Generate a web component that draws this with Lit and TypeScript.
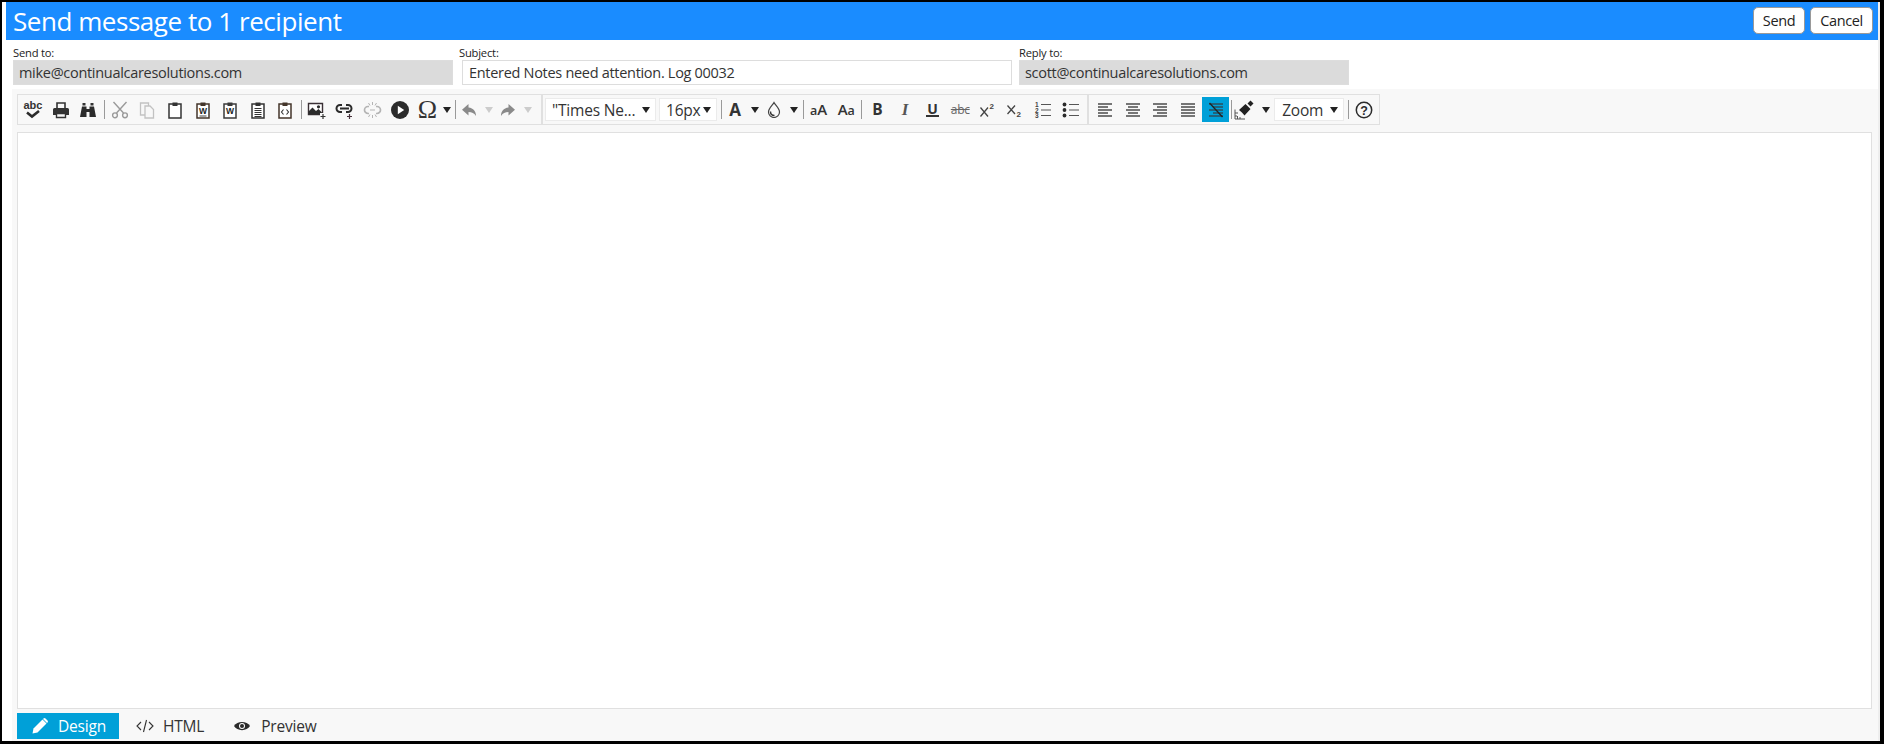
import { LitElement, html, css, svg } from "lit";
import { customElement } from "lit/decorators.js";

const ic = (body: unknown, w = 18, h = 18) =>
  html`<svg class="i" width=${w} height=${h} viewBox="0 0 ${w} ${h}">${body}</svg>`;

const clip = (inner: unknown, c = "#333") => svg`
  <path d="M3 3h12v14H3z" fill="#fff" stroke=${c} stroke-width="1.5"/>
  <path d="M6.5 1.5h5V5h-5z" fill=${c}/>${inner}`;

const wText = (y: number) => svg`<text x="9" y=${y} text-anchor="middle" font-family="Liberation Sans" font-weight="700" font-size="8.5" fill="#222">W</text>`;

const icons: Record<string, unknown> = {
  spell: html`<span class="spell"><span>abc</span><svg width="14" height="9" viewBox="0 0 14 9"><path d="M1 2.5l5 4 7-5.5" fill="none" stroke="#2b2b2b" stroke-width="2.6"/></svg></span>`,
  print: ic(svg`
    <path d="M5 8V2h8v6" fill="none" stroke="#333" stroke-width="1.6"/>
    <path d="M1 8.5q0-1.5 1.5-1.5h13q1.500 0 1.500 1.500V14h-3v-2H4v2H1z" fill="#333"/>
    <path d="M4.500 12.500h9v4h-9z" fill="none" stroke="#333" stroke-width="1.4"/>`),
  find: ic(svg`
    <path d="M3.5 2h3v2.500h-3zM11.500 2h3v2.500h-3z" fill="#333"/>
    <path d="M3 5.500h4.500V8h3V5.500H15l2 10.500h-6.500v-5h-3v5H1z" fill="#2b2b2b"/>`),
  cut: ic(svg`<g fill="none" stroke="#9a9a9a" stroke-width="1.4"><path d="M2.5 1l10 11M15.500 1l-10 11"/><circle cx="4" cy="14.3" r="2.4"/><circle cx="14" cy="14.3" r="2.4"/></g>`),
  copy: ic(svg`<g fill="#f8f8f8" stroke="#c2c2c2" stroke-width="1.3"><path d="M2.5 2h8v12h-8z"/><path d="M7 5h5l3.500 3.500V17H7z"/></g>`),
  paste: ic(clip(svg``)),
  pasteW: ic(clip(svg`${wText(13)}<path d="M5.5 15h7" stroke="#666" stroke-width="1.2"/>`, "#43352a")),
  pasteW2: ic(clip(svg`${wText(13)}`, "#3a3a3a")),
  pasteT: ic(clip(svg`<path d="M5.5 7.500h7M5.500 9.500h7M5.500 11.500h7M5.500 13.500h7M5.500 15.500h7" stroke="#333" stroke-width="1.1"/>`)),
  pasteC: ic(clip(svg`<path d="M7.5 8.500L5.500 11l2 2.500M10.500 8.500l2 2.500-2 2.500" fill="none" stroke="#333" stroke-width="1.1"/>`, "#43352a")),
  image: ic(svg`
    <path d="M1.5 2.500h14v11h-14z" fill="#fff" stroke="#3a3035" stroke-width="1.4"/>
    <path d="M1.5 13.500v-3l4-4 3.500 3.500 2.500-2 4 4v1.500z" fill="#2b2b2b"/>
    <circle cx="11.5" cy="5.800" r="1.6" fill="#2b2b2b"/>
    <path d="M13 12h6v6h-6z" fill="#f8f8f8"/>
    <path d="M13.500 15.500h5M16 13v5" stroke="#333" stroke-width="1.2"/>`, 19),
  link: ic(svg`
    <g fill="none" stroke="#2b2b2b" stroke-width="2"><path d="M7 4H5a3.500 3.500 0 0 0 0 7h2"/><path d="M11 4h2a3.500 3.500 0 0 1 0 7h-2"/><path d="M5 7.500h9"/></g>
    <path d="M12 15.500h5M14.500 13v5" stroke="#45303a" stroke-width="1.2"/>`, 19),
  unlink: ic(svg`
    <g fill="none" stroke="#b4b4b4" stroke-width="1.7"><path d="M6 5.500H5a3.500 3.500 0 0 0 0 7h1"/><path d="M13 5.500h1a3.500 3.500 0 0 1 0 7h-1"/></g>
    <path d="M9.5 1v3M9.500 14v3M5.500 2l1.500 2.500M13.500 2L12 4.500M5.500 16L7 13.500M13.500 16L12 13.500M7 9h5" stroke="#b4b4b4" stroke-width="1" fill="none"/>`, 19),
  media: ic(svg`<circle cx="9" cy="9" r="9" fill="#2b2b2b"/><path d="M6.8 4.800l6.400 4.200-6.400 4.200z" fill="#fff"/>`),
  undo: ic(svg`<path d="M7.5 2L1 7.800l6.500 5.700V10c3.500 0 5.500 1 7.500 4 0-4.500-2.500-8-7.500-8.500z" fill="#8a8a8a"/>`, 16, 16),
  redo: ic(svg`<path d="M8.5 2L15 7.800l-6.500 5.700V10c-3.500 0-5.500 1-7.500 4 0-4.500 2.500-8 7.500-8.500z" fill="#8a8a8a"/>`, 16, 16),
  drop: ic(svg`<path d="M7 1.500c1.800 3.200 5.500 6 5.500 9.500a5.500 5.500 0 0 1-11 0C1.500 7.500 5.200 4.700 7 1.500z" fill="none" stroke="#444" stroke-width="1.2"/><path d="M3.5 10.500c0 2.500 1.500 4 4 4" fill="none" stroke="#333" stroke-width="1.4"/>`, 14, 17),
  sup: ic(svg`<path d="M1.5 6.500l7.500 9M9 6.500l-7.500 9" stroke="#444" stroke-width="1.3"/><text x="10.5" y="7.5" font-size="8" font-weight="700" font-family="Liberation Sans" fill="#444">2</text>`),
  sub: ic(svg`<path d="M1.5 4.500l7.500 8.500M9 4.500L1.500 13" stroke="#444" stroke-width="1.3"/><text x="10.5" y="16" font-size="8" font-weight="700" font-family="Liberation Sans" fill="#444">2</text>`),
  ol: ic(svg`
    <g font-size="6.5" font-weight="700" font-family="Liberation Sans" fill="#444"><text x="1" y="6">1</text><text x="1" y="11.5">2</text><text x="1" y="17">3</text></g>
    <path d="M7 3.500h10M7 9h10M7 14.500h10" stroke="#555" stroke-width="1.1"/>`),
  ul: ic(svg`
    <circle cx="2.5" cy="3.5" r="1.9" fill="#2b2b2b"/><circle cx="2.5" cy="9" r="1.9" fill="#2b2b2b"/><circle cx="2.5" cy="14.5" r="1.9" fill="#2b2b2b"/>
    <path d="M7 3.500h10M7 9h10M7 14.500h10" stroke="#555" stroke-width="1.1"/>`),
  brush: ic(svg`
    <path d="M13.5 3.500L16.500 .5l3 3-3 3z" fill="#222"/>
    <path d="M5 10l6.500-6 5 5-6 6.500C9 13.500 7 11.500 5 10z" fill="#222"/>
    <path d="M1 9.500V19h10M3.500 19v-3M6 19v-2M1 13h3M1 16h2" stroke="#555" fill="none" stroke-width="1"/>`, 20, 20),
  help: ic(svg`<circle cx="9" cy="9" r="7.7" fill="none" stroke="#2b2b2b" stroke-width="1.5"/><text x="9" y="13.5" text-anchor="middle" font-size="12.5" font-weight="700" font-family="Liberation Sans" fill="#2b2b2b">?</text>`),
  bold: html`<span class="g b">B</span>`,
  italic: html`<span class="g em">I</span>`,
  under: html`<span class="g u">U</span>`,
  strike: html`<span class="g st">abc</span>`,
  color: html`<span class="g color">A</span>`,
  lower: html`<span class="g mix"><span class="sm">a</span>A</span>`,
  upper: html`<span class="g mix">A<span class="sm">a</span></span>`,
  omega: html`<span class="g om">Ω</span>`,
};

const alignRows: [number, number][][] = [
  [[1, 15], [1, 11], [1, 15], [1, 11], [1, 15]],
  [[1, 15], [3, 13], [1, 15], [3, 13], [1, 15]],
  [[1, 15], [5, 15], [1, 15], [5, 15], [1, 15]],
  [[1, 15], [1, 15], [1, 15], [1, 15], [1, 15]],
];
const lines = (rows: [number, number][]) =>
  ic(svg`${rows.map(([a, b], i) => svg`<path d="M${a} ${2 + i * 3}H${b}" stroke="#555" stroke-width="1.6"/>`)}`, 16, 16);

@customElement("app-root")
export class AppRoot extends LitElement {
  static styles = css`
    :host { display: block; font-family: "Open Sans", "Noto Sans", sans-serif; }
    .frame {
      box-sizing: border-box; width: 1884px; height: 744px; background: #000;
      padding: 2px 4px 3px 2px; display: flex;
    }
    .win {
      flex: 1; min-width: 0; background: #fff; display: flex; flex-direction: column;
      padding-left: 4px; border-right: 2px solid #eee;
    }
    .head {
      height: 38px; flex: none; background: #1a8cff; color: #fff; display: flex; align-items: center;
      justify-content: space-between; padding: 0 5px 0 7px; box-sizing: border-box;
    }
    .head h1 { margin: 0; font-size: 26px; font-weight: 400; letter-spacing: -0.45px; line-height: 38px; }
    .btns { display: flex; gap: 5px; margin-bottom: 2px; }
    .btn {
      background: #fff; border: 1px solid #999; border-radius: 5px; height: 27px; width: 52px;
      box-sizing: border-box; font-size: 14.5px; color: #222; display: flex; align-items: center;
      justify-content: center; letter-spacing: -0.4px;
    }
    .btn.wide { width: 63px; }
    .fields { height: 49px; flex: none; display: flex; padding: 6px 0 0 7px; box-sizing: border-box; }
    .field { display: flex; flex-direction: column; }
    .field label { font-size: 11.2px; line-height: 14px; height: 14px; color: #222; letter-spacing: -0.2px; }
    .val {
      box-sizing: border-box; height: 25px; border: 1px solid #ddd; background: #dbdbdb; color: #333;
      font-size: 14.5px; padding: 0 5px; line-height: 23px; letter-spacing: -0.3px; white-space: nowrap;
    }
    .val.edit { background: #fff; margin-left: 3px; padding-left: 6px; }
    .to { width: 446px; } .to .val { width: 440px; }
    .subj { width: 560px; } .subj .val { width: 550px; }
    .reply .val { width: 330px; }
    .editor {
      flex: 1; display: flex; flex-direction: column; padding: 5px 6px 0 5px; margin-left: 6px;
      min-height: 0; background: #f8f8f8;
    }
    .tb {
      align-self: flex-start; display: flex; align-items: center; height: 31px; box-sizing: border-box;
      border: 1px solid #e0e0e0; white-space: nowrap;
    }
    .grp { display: flex; align-items: center; height: 100%; }
    .g1 { padding: 0 0 0 1.2px; width: 523px; box-sizing: border-box; }
    .g2 { padding: 0 2.8px 0 2px; border-left: 2px solid #e0e0e0; }
    .g3 { padding: 0 1.2px 0 2.2px; border-left: 2px solid #e0e0e0; }
    .it { width: 27.6px; height: 25px; display: flex; align-items: center; justify-content: center; flex: none; }
    .it.n { width: 24px; }
    .it.on { background: #00a0d8; }
    .it.ml { margin-left: 2.5px; }
    .sp { width: 1px; height: 19px; background: #9a9a9a; flex: none; margin: 0 1px 0 2px; }
    .sp.a { margin: 0 1px 0 4px; }
    .sp.b { margin: 0 1.2px 0 5px; }
    .sp.c { margin: 0 1.2px 0 1.6px; }
    .sp.d { margin: 0 0 0 1.8px; }
    .sp.e { margin: 0 1.2px 0 4px; }
    .car { width: 0; height: 0; border: 4.5px solid transparent; border-top: 6px solid #222; border-bottom: 0; flex: none; }
    .car.off { border-top-color: #ccc; }
    .car.l2 { margin-left: 2px; }
    .car.l3 { margin-left: 4px; }
    .car.l5 { margin-left: 5.5px; }
    .i { display: block; }
    .spell { display: flex; flex-direction: column; align-items: center; font: 700 11px/9px "Liberation Sans", sans-serif; color: #333; }
    .spell svg { display: block; }
    .g { font-family: "Open Sans", sans-serif; color: #333; line-height: 1; display: block; }
    .g.b { font-weight: 700; font-size: 15.5px; }
    .g.em { font-family: "Liberation Serif", serif; font-style: italic; font-weight: 700; font-size: 17px; color: #555; }
    .g.u { font-weight: 700; font-size: 14px; border-bottom: 2px solid #333; line-height: 13px; padding: 0 1px; }
    .g.st { font-size: 12px; text-decoration: line-through; color: #666; letter-spacing: -0.3px; }
    .g.color { font-weight: 700; font-size: 17px; }
    .g.mix { font-size: 15px; font-weight: 600; letter-spacing: -0.2px; }
    .g.mix .sm { font-size: 12.5px; }
    .g.om { font-family: "Liberation Serif", serif; font-size: 26px; line-height: 22px; }
    .sel {
      box-sizing: border-box; height: 23px; background: #fff; border: 1px solid #ebebeb; display: flex; align-items: center;
      justify-content: space-between; font-size: 15.5px; color: #333; flex: none; letter-spacing: -0.2px;
    }
    .sel.font { width: 111px; padding: 0 5px 0 6px; margin-right: 3px; }
    .sel.size { width: 58px; padding: 0 5px 0 6px; }
    .sel.zoom { width: 70px; padding: 0 5px 0 7px; margin-left: 4.5px; }
    .area { flex: 1; margin-top: 7px; background: #fff; border: 1px solid #e0e0e0; min-height: 0; }
    .tabs { height: 28px; margin-top: 4px; flex: none; display: flex; align-items: flex-start; }
    .tab { height: 26px; display: flex; align-items: center; font-size: 15.5px; color: #333; box-sizing: border-box; letter-spacing: -0.2px; }
    .tab.on { background: #00a0d8; color: #fff; width: 102px; padding-left: 15px; gap: 10px; }
    .tab.h { padding: 0 15px 0 17px; gap: 9px; }
    .tab.p { padding-left: 15px; gap: 11px; }
    .tab svg { display: block; }
  `;

  private it(k: string, cls = "") { return html`<span class="it ${cls}">${icons[k]}</span>`; }
  private sp(cls = "") { return html`<span class="sp ${cls}"></span>`; }

  render() {
    return html`<div class="frame"><div class="win">
      <div class="head"><h1>Send message to 1 recipient</h1>
        <div class="btns"><span class="btn">Send</span><span class="btn wide">Cancel</span></div></div>
      <div class="fields">
        <div class="field to"><label>Send to:</label><div class="val">mike@continualcaresolutions.com</div></div>
        <div class="field subj"><label>Subject:</label><div class="val edit">Entered Notes need attention. Log 00032</div></div>
        <div class="field reply"><label>Reply to:</label><div class="val">scott@continualcaresolutions.com</div></div>
      </div>
      <div class="editor">
        <div class="tb">
          <div class="grp g1">
            ${this.it("spell")}${this.it("print")}${this.it("find")}${this.sp()}
            ${this.it("cut")}${this.it("copy")}${this.it("paste")}${this.it("pasteW")}${this.it("pasteW2")}${this.it("pasteT")}${this.it("pasteC")}${this.sp()}
            ${this.it("image")}${this.it("link")}${this.it("unlink")}${this.it("media")}
            ${this.it("omega")}<span class="car l2"></span>
            ${this.sp("a")}
            ${this.it("undo", "n")}<span class="car off l3"></span>
            ${this.it("redo", "n ml")}<span class="car off l3"></span>
          </div>
          <div class="grp g2">
            <span class="sel font">"Times Ne...<span class="car"></span></span>
            <span class="sel size">16px<span class="car"></span></span>
            ${this.sp("a")}
            ${this.it("color", "n")}<span class="car l3"></span>
            ${this.it("drop", "n ml")}<span class="car l3"></span>
            ${this.sp("b")}
            ${this.it("lower")}${this.it("upper")}
            ${this.sp("c")}
            ${this.it("bold")}${this.it("italic")}${this.it("under")}${this.it("strike")}
            ${this.it("sup")}${this.it("sub")}${this.it("ol")}${this.it("ul")}
          </div>
          <div class="grp g3">
            ${alignRows.map((r) => html`<span class="it">${lines(r)}</span>`)}
            <span class="it on">${ic(svg`${[0, 1, 2, 3, 4].map((i) => svg`<path d="M${i % 2 ? 5 : 1} ${2 + i * 3}H15" stroke="#2f4a55" stroke-width="1.4"/>`)}<path d="M1.5 1l13 14" stroke="#222" stroke-width="1.3"/>`, 16, 16)}</span>
            ${this.sp("d")}
            ${this.it("brush", "n")}<span class="car l5"></span>
            <span class="sel zoom">Zoom<span class="car"></span></span>
            ${this.sp("e")}
            ${this.it("help")}
          </div>
        </div>
        <div class="area"></div>
        <div class="tabs">
          <span class="tab on"><svg width="16" height="16" viewBox="0 0 16 16"><path d="M0.5 15.500l1-5L10.500 1.500l4 4-9 9z" fill="#fff"/><path d="M11.5 0.500a1.500 1.500 0 0 1 2 0l2 2a1.500 1.500 0 0 1 0 2l-.5.500-4-4z" fill="#fff"/></svg>Design</span>
          <span class="tab h"><svg width="18" height="14" viewBox="0 0 18 14" fill="none" stroke="#333" stroke-width="1.1"><path d="M5 3L1 7l4 4M13 3l4 4-4 4M10.5 1L7.5 13"/></svg>HTML</span>
          <span class="tab p"><svg width="16" height="12" viewBox="0 0 16 12"><path d="M0 6c3-5.500 13-5.500 16 0-3 5.500-13 5.500-16 0z" fill="#2b2b2b"/><circle cx="8" cy="6" r="3" fill="#fff"/><circle cx="8" cy="6" r="2" fill="#2b2b2b"/></svg>Preview</span>
        </div>
      </div>
    </div></div>`;
  }
}
